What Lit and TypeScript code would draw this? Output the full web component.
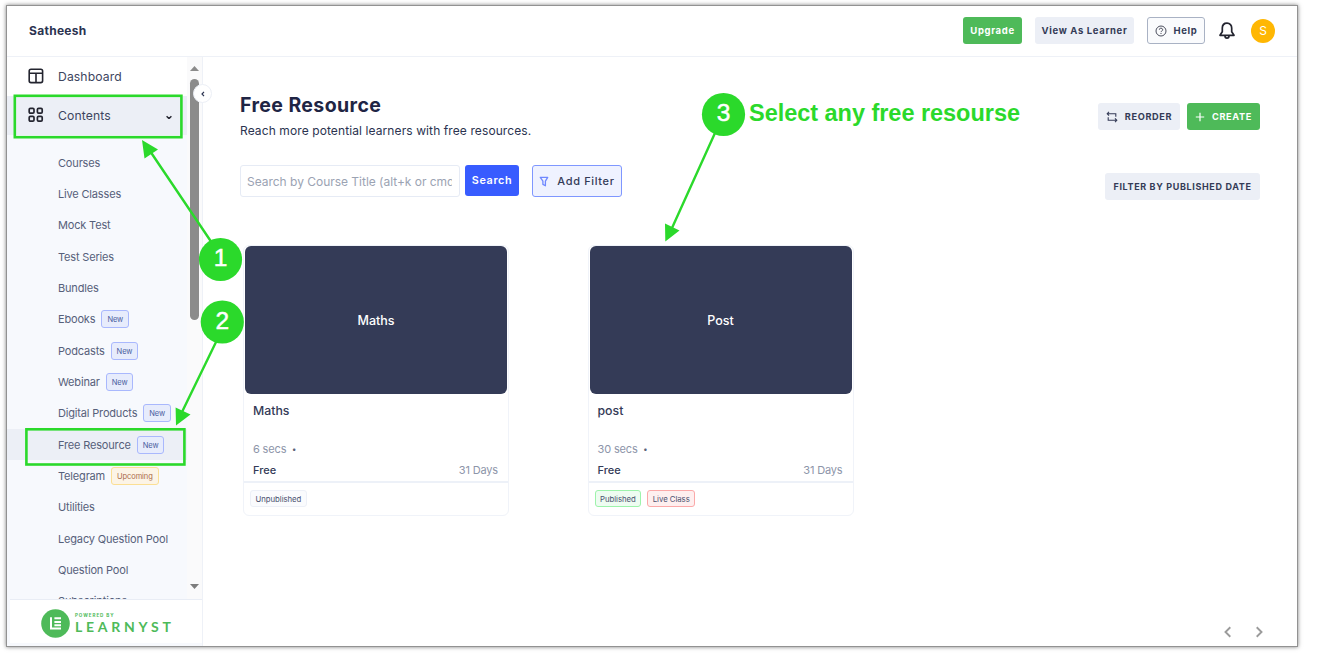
import { LitElement, css, html, svg, nothing } from 'lit';
import { customElement, property } from 'lit/decorators.js';
import { classMap } from 'lit/directives/class-map.js';

interface MenuItem {
  label: string;
  tag?: 'New' | 'Upcoming';
  active?: boolean;
}

interface Resource {
  cover: string;
  title: string;
  duration: string;
  validity: string;
  tags: { label: string; kind: string }[];
}

const MENU: MenuItem[] = [
  { label: 'Courses' },
  { label: 'Live Classes' },
  { label: 'Mock Test' },
  { label: 'Test Series' },
  { label: 'Bundles' },
  { label: 'Ebooks', tag: 'New' },
  { label: 'Podcasts', tag: 'New' },
  { label: 'Webinar', tag: 'New' },
  { label: 'Digital Products', tag: 'New' },
  { label: 'Free Resource', tag: 'New', active: true },
  { label: 'Telegram', tag: 'Upcoming' },
  { label: 'Utilities' },
  { label: 'Legacy Question Pool' },
  { label: 'Question Pool' },
  { label: 'Subscriptions' },
];

const RESOURCES: Resource[] = [
  {
    cover: 'Maths',
    title: 'Maths',
    duration: '6 secs',
    validity: '31 Days',
    tags: [{ label: 'Unpublished', kind: 'plain' }],
  },
  {
    cover: 'Post',
    title: 'post',
    duration: '30 secs',
    validity: '31 Days',
    tags: [
      { label: 'Published', kind: 'green' },
      { label: 'Live Class', kind: 'red' },
    ],
  },
];

@customElement('side-menu')
export class SideMenu extends LitElement {
  static styles = css`
    :host {
      display: flex;
      flex-direction: column;
      position: relative;
      width: 196px;
      box-sizing: border-box;
      border-right: 1px solid #eef1f7;
      background: #f7f9fd;
    }
    .scroll {
      display: flex;
      flex: 1;
      min-height: 0;
      overflow: hidden;
    }
    .list {
      flex: 1;
      min-width: 0;
    }
    .top {
      display: flex;
      align-items: center;
      height: 39px;
      box-sizing: border-box;
      padding: 0 14px 1px 21px;
      gap: 14px;
      font-size: 12.2px;
      letter-spacing: 0.1px;
      color: #3d4560;
      background: #fff;
    }
    .top span {
      flex: 1;
    }
    .top.open {
      background: #eceff6;
    }
    .sub {
      padding-top: 12px;
    }
    .item {
      display: flex;
      align-items: center;
      gap: 6px;
      height: 31.35px;
      padding-left: 51px;
      font-size: 11px;
      letter-spacing: -0.17px;
      color: #56607a;
      white-space: nowrap;
    }
    .item.active {
      background: #eceff6;
    }
    .tag {
      height: 18px;
      line-height: 17px;
      box-sizing: border-box;
      padding: 0 5px;
      border: 1px solid #a9b8fd;
      border-radius: 3px;
      background: #e7ecfc;
      color: #4a5da0;
      font-size: 7.5px;
      letter-spacing: -0.1px;
    }
    .tag.upcoming {
      border-color: #fbdf94;
      background: #fcf4e6;
      color: #ab6a4a;
    }
    .bar {
      display: flex;
      flex-direction: column;
      align-items: center;
      width: 15px;
      padding: 9px 0 10px;
      box-sizing: border-box;
      background: #fafafb;
    }
    .thumb {
      width: 9px;
      height: 241px;
      margin: 8px 0 auto;
      border-radius: 5px;
      background: #8b8b8b;
    }
    .bar svg {
      display: block;
    }
    .brand {
      display: flex;
      align-items: center;
      gap: 5px;
      height: 44px;
      margin: 0 0 3px 3px;
      padding: 4px 0 0 31px;
      border-top: 1px solid #e9edf5;
      box-sizing: border-box;
      background: #fff;
      color: #4eba59;
    }
    .brand-text {
      display: flex;
      flex-direction: column;
    }
    .powered {
      font-size: 4.5px;
      line-height: 5px;
      font-weight: 700;
      letter-spacing: 0.95px;
    }
    .name {
      font-family: Lato, sans-serif;
      font-size: 14px;
      line-height: 17px;
      font-weight: 700;
      letter-spacing: 3.75px;
    }
    .collapse {
      position: absolute;
      top: 27px;
      right: -10px;
      display: grid;
      place-items: center;
      width: 19px;
      height: 19px;
      box-sizing: border-box;
      border: 1px solid #eceff6;
      border-radius: 50%;
      background: #fff;
    }
  `;

  @property({ attribute: false }) items: MenuItem[] = [];

  render() {
    return html`
      <div class="scroll">
        <div class="list">
          <div class="top">
            <svg width="16" height="16" viewBox="0 0 16 16" fill="none" stroke="#23242f" stroke-width="1.6">
              <rect x="1.2" y="1.2" width="13.4" height="13.4" rx="1.8" />
              <path d="M1.2 5.2h13.4M8 5.2v9.4" />
            </svg>
            <span>Dashboard</span>
          </div>
          <div class="top open">
            <svg width="16" height="16" viewBox="0 0 16 16" fill="none" stroke="#23242f" stroke-width="1.7">
              <rect x="1.2" y="1.4" width="4.8" height="4.8" rx="1.2" />
              <rect x="9.4" y="1.4" width="4.8" height="4.8" rx="1.2" />
              <rect x="1.2" y="9.4" width="4.8" height="4.8" rx="1.2" />
              <rect x="9.4" y="9.4" width="4.8" height="4.8" rx="1.2" />
            </svg>
            <span>Contents</span>
            <svg width="8" height="8" viewBox="0 0 8 8" fill="none" stroke="#23242f" stroke-width="1.4">
              <path d="M1.6 5.2 4 7.6l2.400-2.400" />
            </svg>
          </div>
          <div class="sub">
            ${this.items.map(
              (item) => html`
                <div class=${classMap({ item: true, active: !!item.active })}>
                  ${item.label}
                  ${item.tag
                    ? html`<span class=${classMap({ tag: true, upcoming: item.tag === 'Upcoming' })}>${item.tag}</span>`
                    : nothing}
                </div>
              `
            )}
          </div>
        </div>
        <div class="bar">
          <svg width="9" height="5" viewBox="0 0 9 5" fill="#8b8b8b"><path d="M0 5 4.5 0 9 5z" /></svg>
          <div class="thumb"></div>
          <svg width="9" height="5" viewBox="0 0 9 5" fill="#7d7d7d"><path d="M0 0 4.5 5 9 0z" /></svg>
        </div>
      </div>
      <div class="brand">
        <svg width="29" height="29" viewBox="0 0 29 29">
          <circle cx="14.5" cy="14.5" r="14.3" fill="#4eba59" />
          <path d="M10 8.200V19.600H20M13.400 9.300H20M13.400 12.900H20M13.400 16.300H20" fill="none" stroke="#fff" stroke-width="2" />
        </svg>
        <div class="brand-text">
          <span class="powered">POWERED BY</span>
          <span class="name">LEARNYST</span>
        </div>
      </div>
      <div class="collapse">
        <svg width="6" height="6" viewBox="0 0 6 6" fill="none" stroke="#2b3350" stroke-width="1.2">
          <path d="M4 .9 2 3l2 2.1" />
        </svg>
      </div>
    `;
  }
}

@customElement('resource-card')
export class ResourceCard extends LitElement {
  static styles = css`
    :host {
      display: block;
      width: 266px;
      height: 271px;
      box-sizing: border-box;
      border: 1px solid #f0f3f9;
      border-radius: 6px;
      color: #343b57;
    }
    .cover {
      display: grid;
      place-items: center;
      height: 148px;
      margin: 0 1px;
      box-sizing: border-box;
      border-radius: 6px;
      background: #343b57;
      color: #fff;
      font-size: 12.5px;
      font-weight: 500;
    }
    .body {
      display: flex;
      flex-direction: column;
      height: 89px;
      box-sizing: border-box;
      padding: 8px 10px 0 9px;
      border-bottom: 2px solid #edf1f8;
      font-size: 11px;
    }
    .title {
      height: 37px;
      line-height: 17px;
      font-size: 12.3px;
      font-weight: 500;
    }
    .row {
      display: flex;
      justify-content: space-between;
      line-height: 20.5px;
    }
    .muted {
      color: #8d95a9;
      letter-spacing: -0.15px;
    }
    .muted b {
      margin-left: 3px;
      font-size: 8px;
      color: #5b6379;
      vertical-align: 1px;
    }
    .price {
      font-weight: 500;
    }
    .tags {
      display: flex;
      gap: 6px;
      padding: 7px 6px;
    }
    .tag {
      height: 17px;
      line-height: 16px;
      box-sizing: border-box;
      padding: 0 4.5px;
      border: 1px solid #edf0f7;
      border-radius: 3px;
      background: #fafbfd;
      font-size: 7.8px;
      letter-spacing: -0.05px;
      color: #4b5270;
    }
    .tag.green {
      border-color: #9df3ab;
      background: #eefcf1;
    }
    .tag.red {
      border-color: #fba9a9;
      background: #feefef;
    }
  `;

  @property({ attribute: false }) resource?: Resource;

  render() {
    const r = this.resource;
    if (!r) return nothing;
    return html`
      <div class="cover">${r.cover}</div>
      <div class="body">
        <div class="title">${r.title}</div>
        <div class="row"><span class="muted">${r.duration} <b>•</b></span></div>
        <div class="row"><span class="price">Free</span><span class="muted">${r.validity}</span></div>
      </div>
      <div class="tags">${r.tags.map((t) => html`<span class="tag ${t.kind}">${t.label}</span>`)}</div>
    `;
  }
}

@customElement('guide-overlay')
export class GuideOverlay extends LitElement {
  static styles = css`
    :host {
      position: absolute;
      inset: 0;
      pointer-events: none;
    }
    svg {
      display: block;
    }
    .box,
    .line {
      fill: none;
      stroke: #2bd92b;
    }
    .box {
      stroke-width: 2.6;
    }
    .line {
      stroke-width: 2.4;
    }
    .fill {
      fill: #2bd92b;
    }
    .num {
      fill: #fff;
      font: 24.5px 'Liberation Sans', Arial, sans-serif;
      text-anchor: middle;
      stroke: #fff;
      stroke-width: 0.5;
    }
    .note {
      fill: #2bd92b;
      font: bold 23.5px 'Liberation Sans', Arial, sans-serif;
    }
  `;

  private _step(n: number, x: number, y: number) {
    return svg`
      <circle class="fill" cx=${x} cy=${y} r="21.6" />
      <text class="num" x=${x} y=${y + 6.5}>${n}</text>
    `;
  }

  render() {
    return html`
      <svg width="1318" height="654" viewBox="0 0 1318 654">
        <rect class="box" x="14.8" y="95.8" width="166.6" height="41.4" />
        <rect class="box" x="26.4" y="429.3" width="158" height="35.2" />
        <path class="line" d="M212 243 150 151M217 340 182 412M715 133 672 228" />
        <path class="fill" d="M142 140 158 149.500 144.500 158.500zM176 425.500 175.600 407.500 190.500 414.500zM665.300 241.500 665 223.500 679.500 230.500z" />
        ${this._step(1, 220.5, 259.5)} ${this._step(2, 222.3, 322)} ${this._step(3, 723.5, 114.5)}
        <text class="note" x="749" y="120.5" textLength="271">Select any free resourse</text>
      </svg>
    `;
  }
}

@customElement('app-root')
export class AppRoot extends LitElement {
  static styles = css`
    :host {
      display: block;
      position: relative;
      width: 1318px;
      height: 654px;
      box-sizing: border-box;
      padding: 6px 21px 8px 7px;
      background: #fff;
      overflow: hidden;
      font-family: Inter, 'Liberation Sans', sans-serif;
      color: #2b3350;
    }
    .frame {
      display: flex;
      flex-direction: column;
      height: 640px;
      background: #fff;
      box-shadow: 0 0 0 1px #929292, 0 0 4px 1px rgba(0, 0, 0, 0.5);
    }
    header {
      display: flex;
      align-items: center;
      height: 51px;
      flex: none;
      box-sizing: border-box;
      padding: 0 22px 1px 22px;
      border-bottom: 1px solid #eef1f7;
    }
    .school {
      margin-right: auto;
      font-size: 12px;
      font-weight: 700;
      letter-spacing: 0.3px;
    }
    .btn {
      display: flex;
      align-items: center;
      justify-content: center;
      gap: 7px;
      height: 27px;
      box-sizing: border-box;
      border-radius: 3px;
      background: #eceff6;
      color: #343b57;
      font-size: 9.5px;
      font-weight: 700;
      letter-spacing: 0.65px;
      white-space: nowrap;
    }
    .green {
      background: #4eba59;
      color: #fff;
    }
    .upgrade {
      width: 59px;
      margin-right: 13px;
    }
    .learner {
      width: 99px;
      margin-right: 13px;
    }
    .help {
      width: 58px;
      margin-right: 13px;
      border: 1px solid #a9b2c4;
      background: #fafbfd;
    }
    .avatar {
      display: grid;
      place-items: center;
      width: 24px;
      height: 24px;
      margin-left: 15px;
      border-radius: 50%;
      background: #ffb703;
      color: #fff;
      font-size: 12px;
    }
    .layout {
      display: flex;
      flex: 1;
      min-height: 0;
    }
    main {
      display: flex;
      flex-direction: column;
      flex: 1;
      padding: 36px 37px 8px;
    }
    .head {
      display: flex;
      justify-content: space-between;
      height: 72px;
    }
    h1 {
      margin: 0;
      font-size: 19.5px;
      line-height: 24px;
      font-weight: 700;
      letter-spacing: 0.4px;
      color: #1f2544;
    }
    .lead {
      margin: 6px 0 0;
      font-size: 12px;
      line-height: 16px;
      letter-spacing: 0.1px;
    }
    .actions {
      display: flex;
      gap: 7px;
      padding-top: 10px;
    }
    .reorder {
      width: 82px;
      font-size: 9.2px;
    }
    .create {
      width: 73px;
      font-size: 9.2px;
    }
    .tools {
      display: flex;
      height: 80px;
    }
    .search {
      width: 220px;
      height: 32px;
      box-sizing: border-box;
      padding: 0 7px 0 6px;
      border: 1px solid #e6ebf5;
      border-radius: 3px;
      line-height: 31px;
      font-size: 12px;
      letter-spacing: -0.02px;
      color: #9ba3b3;
      white-space: nowrap;
    }
    .search span {
      display: block;
      overflow: hidden;
    }
    .go {
      width: 54px;
      height: 31px;
      margin: 0 13px 0 5px;
      background: #385cff;
      color: #fff;
      font-size: 10.8px;
      font-weight: 600;
    }
    .add {
      width: 90px;
      height: 32px;
      gap: 8px;
      border: 1px solid #7f97ff;
      background: #eff2ff;
      font-size: 11px;
      font-weight: 500;
    }
    .date {
      width: 155px;
      margin: 8px 0 0 auto;
      font-size: 9px;
    }
    .cards {
      display: flex;
      gap: 78.5px;
      padding-left: 3px;
    }
    .pager {
      display: flex;
      justify-content: flex-end;
      gap: 19px;
      margin-top: auto;
      margin-right: -5px;
    }
  `;

  render() {
    return html`
      <div class="frame">
        <header>
          <span class="school">Satheesh</span>
          <span class="btn green upgrade">Upgrade</span>
          <span class="btn learner">View As Learner</span>
          <span class="btn help">
            <svg width="12" height="12" viewBox="0 0 12 12" fill="none" stroke="#4a4d5c">
              <circle cx="6" cy="6" r="5" />
              <path d="M4.3 4.7a1.7 1.5 0 1 1 2.5 1.3q-.8.4-.8 1.1M6 8v1" />
            </svg>
            Help
          </span>
          <svg width="18" height="18" viewBox="0 0 18 18" fill="none" stroke="#23242f" stroke-width="1.7" stroke-linejoin="round">
            <path d="M9 1.2C6 1.2 4.3 3.3 4.3 6v3.7L2 13.3h14l-2.300-3.600V6C13.700 3.300 12 1.200 9 1.200z" />
            <path d="M7 14c0 2.900 4 2.900 4 0" />
          </svg>
          <span class="avatar">S</span>
        </header>
        <div class="layout">
          <side-menu .items=${MENU}></side-menu>
          <main>
            <div class="head">
              <div>
                <h1>Free Resource</h1>
                <p class="lead">Reach more potential learners with free resources.</p>
              </div>
              <div class="actions">
                <span class="btn reorder">
                  <svg width="12" height="12" viewBox="0 0 12 12" fill="none" stroke="#343b57" stroke-width="1.1">
                    <path d="M3 .8 1.200 2.700 3 4.600M1.200 2.700h8.600v3M9 7.400l1.800 1.900L9 11.200M10.800 9.300H2.200v-3" />
                  </svg>
                  REORDER
                </span>
                <span class="btn green create">
                  <svg width="10" height="10" viewBox="0 0 10 10" stroke="#fff" stroke-width="1.2">
                    <path d="M5 .8v8.4M.8 5h8.4" />
                  </svg>
                  CREATE
                </span>
              </div>
            </div>
            <div class="tools">
              <div class="search"><span>Search by Course Title (alt+k or cmd+k)</span></div>
              <span class="btn go">Search</span>
              <span class="btn add">
                <svg width="10" height="11" viewBox="0 0 10 11" fill="none" stroke="#6f88ff" stroke-width="1.3" stroke-linejoin="round">
                  <path d="M1.300 1.300h7.400L6.400 5.200V9.800L3.900 8.400V5.200z" />
                </svg>
                Add Filter
              </span>
              <span class="btn date">FILTER BY PUBLISHED DATE</span>
            </div>
            <div class="cards">
              ${RESOURCES.map((r) => html`<resource-card .resource=${r}></resource-card>`)}
            </div>
            <div class="pager">
              <svg width="12" height="12" viewBox="0 0 12 12" fill="none" stroke="#9b9b9b" stroke-width="1.9">
                <path d="M8.3 1.3 3.5 6l4.8 4.7" />
              </svg>
              <svg width="12" height="12" viewBox="0 0 12 12" fill="none" stroke="#9b9b9b" stroke-width="1.9">
                <path d="M3.7 1.3 8.5 6l-4.8 4.7" />
              </svg>
            </div>
          </main>
        </div>
      </div>
      <guide-overlay></guide-overlay>
    `;
  }
}
